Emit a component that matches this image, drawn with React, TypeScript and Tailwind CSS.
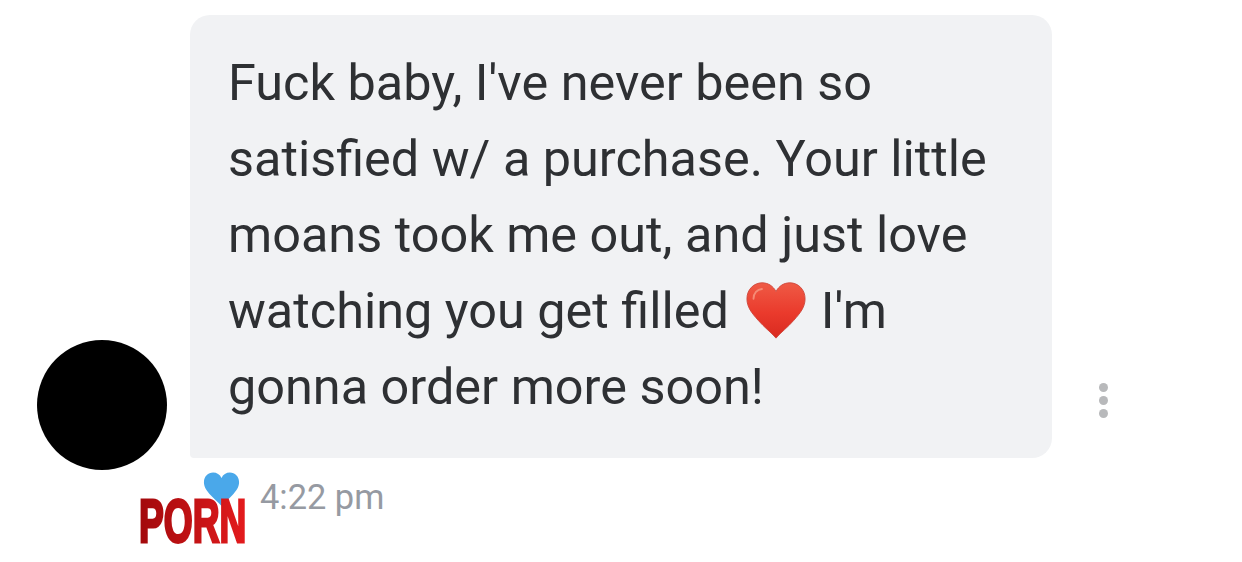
export default function App() {
  const heart = "M16 30C13.500 27 10 24.500 6.500 20.500C3 16.500 0.500 13.500 0.500 9C0.500 4 4.200 0.500 8.600 0.500C11.800 0.500 14.600 2.300 16 5.200C17.400 2.300 20.200 0.500 23.400 0.500C27.800 0.500 31.500 4 31.500 9C31.500 13.500 29 16.500 25.500 20.500C22 24.500 18.500 27 16 30Z";
  return (
    <div className="w-[1242px] h-[562px] bg-white overflow-hidden relative font-['Roboto',sans-serif]">
      <div className="flex items-end pt-[15px] pl-[37px]">
        <div className="w-[130px] h-[130px] rounded-full bg-black mb-[-12px] mr-[23px] shrink-0" />
        <div className="w-[862px] h-[443px] bg-[#f1f2f4] rounded-[20px] rounded-bl-[4px] pl-[39px] pt-[30px] text-[50.4px] leading-[76px] text-[#2e3033] shrink-0 -indent-px">
          <p>Fuck baby, I've never been so</p>
          <p>satisfied w/ a purchase. Your little</p>
          <p>moans took me out, and just love</p>
          <p className="flex items-center">watching you get filled
            <svg viewBox="0 0 32 30" className="w-[60px] h-[58px] ml-[17px] mr-[16px] -mt-[2px]">
              <defs>
                <linearGradient id="redHeart" x1="0" y1="0" x2="0" y2="1">
                  <stop offset="0" stopColor="#ef5a45" />
                  <stop offset="0.55" stopColor="#ea3a2c" />
                  <stop offset="1" stopColor="#d92a20" />
                </linearGradient>
              </defs>
              <path d={heart} fill="url(#redHeart)" stroke="#cf4a3e" strokeWidth="0.5" />
              <path d="M4 9C4 6 6 4 8.500 3.800" fill="none" stroke="#f58a75" strokeWidth="1" strokeLinecap="round" />
            </svg>
            I'm</p>
          <p>gonna order more soon!</p>
        </div>
        <div className="flex flex-col gap-[4px] ml-[47px] mb-[40px]">
          <div className="w-[9px] h-[9px] rounded-full bg-[#b8b9bb]" />
          <div className="w-[9px] h-[9px] rounded-full bg-[#b8b9bb]" />
          <div className="w-[9px] h-[9px] rounded-full bg-[#b8b9bb]" />
        </div>
      </div>
      <div className="flex items-start pl-[203px] pt-[14px] gap-[20px]">
        <svg viewBox="0 0 32 30" className="w-[37px] h-[34px]"><path d={heart} fill="#4aa8ea" /></svg>
        <span className="text-[34.400px] text-[#969aa2] leading-[40px] mt-[5px]">4:22 pm</span>
      </div>
      <div className="absolute left-[139px] top-[490px] h-[64px] font-['Liberation_Sans',sans-serif] font-bold text-[62px] leading-[62px] scale-x-[0.6] origin-left bg-gradient-to-r from-[#a2090c] to-[#e41b1d] bg-clip-text text-transparent [-webkit-text-stroke:3px_transparent]">PORN</div>
    </div>
  );
}
